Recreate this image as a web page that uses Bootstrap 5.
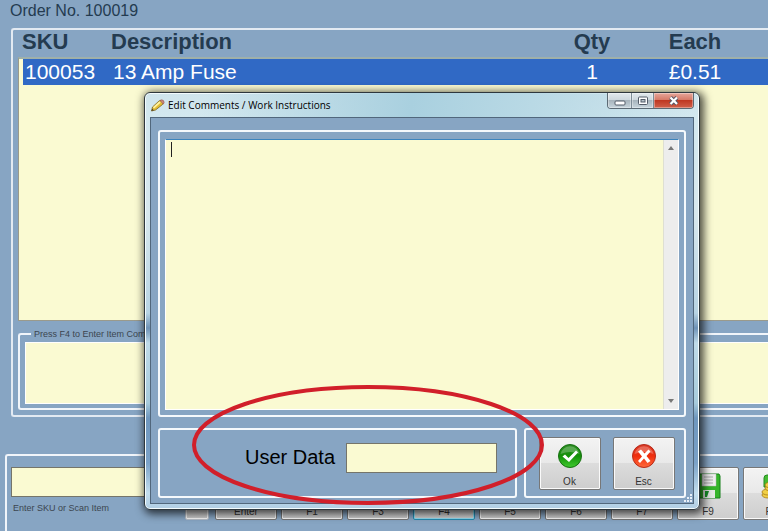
<!DOCTYPE html>
<html lang="en">
<head>
<meta charset="utf-8">
<meta name="viewport" content="width=device-width, initial-scale=1">
<title>Order No. 100019</title>
<link href="https://cdn.jsdelivr.net/npm/bootstrap@5.3.0/dist/css/bootstrap.min.css" rel="stylesheet">
<style>
:root { --panel:#87a5c3; --cream:#fafad2; --line:#f1f5fa; --ink:#243b50; }
body { background:var(--panel); font-family:"Liberation Sans",Arial,sans-serif; color:var(--ink); }
.screen { min-height:100vh; }
.order-title { font-size:16px; line-height:20px; padding:1px 10px 7px; }
.order-panel { margin-left:11px; border:2px solid #e3eaf2; border-right:0; border-radius:3px 0 0 3px; padding:0 0 5px 5px; }
.items { table-layout:fixed; border-collapse:separate; border-spacing:0; width:100%; }
.items th { font-size:22px; line-height:24px; height:27px; padding:0 0 3px 4px; color:var(--ink); }
.items td { font-size:21px; line-height:24px; height:28px; padding:1px 0 1px 6px; color:#fff; background:#3069c5; border-top:2px solid #9fb0aa; }
.items td:first-child { border-left:1px solid #9a9a8c; background:linear-gradient(90deg,var(--cream) 4px,#3069c5 4px); }
.items .num { text-align:center; padding-left:0; }
.col-sku { width:89px; } .col-qty { width:102px; } .col-each { width:104px; } .col-end { width:21px; }
.list-rest { height:236px; background:var(--cream); border-left:1px solid #9a9a8c; border-bottom:1px solid #9a9a8c; }
.item-comments { position:relative; margin-top:12px; border:2px solid var(--line); border-right:0; border-radius:3px 0 0 3px; padding:7px 0 4px 5px; }
.item-comments label { position:absolute; top:-8px; left:11px; padding:0 3px; background:var(--panel); font-size:9px; line-height:14px; color:#3c4650; white-space:nowrap; }
.note-box { height:62px; width:100%; resize:none; border:1px solid #fff; border-right:0; background:var(--cream); display:block; }
.entry-panel { margin:37px 0 0 5px; border:2px solid var(--line); border-width:2px 0 0 2px; border-radius:3px 0 0 0; padding:11px 0 12px 4px; overflow:hidden; flex-grow:1; }
.scan { width:168px; margin-right:6px; flex-shrink:0; }
.scan input { height:30px; width:100%; border:1px solid #75756a; background:var(--cream); display:block; }
.scan label { font-size:9px; line-height:14px; margin:4px 2px; color:#3c4650; display:block; }
.tool { width:62px; height:53px; flex-shrink:0; border:1px solid #777; border-radius:2px; box-shadow:inset 0 0 0 1px #fafafa; background:linear-gradient(#f3f3f3,#e9e9e9 48%,#dcdcdc 50%,#cdcdcd); font-size:10px; line-height:12px; color:#333; padding:4px 0 0; }
.tool svg { display:block; margin:0 auto; }
.tool span { display:block; margin-top:7px; }
.tool.slim { width:24px; margin-right:2px; border-color:#b7bfc8; }
.tool.current { border-color:#258bb0; box-shadow:inset 0 0 0 1px #8fdcf2; }
.edit-window { position:absolute; top:92px; left:144px; right:68px; border:1px solid #2e373d; border-radius:6px; padding:0 5px 5px; box-shadow:inset 0 0 0 1px #f3fbfd,2px 2px 9px 2px rgba(0,0,0,.7);
 background:linear-gradient(#cfe4ec,#d3e8ef 24px,#d8e8ee 120px,#b8d4e4 220px,#6f93b7 235px,#bfdbe9 250px,#a7cbdc 310px,#6f97be 325px,#7ba2c8 370px,#c4dfef 400px,#b0cde3); }
.caption-bar { height:24px; font-family:"Open Sans","Noto Sans",sans-serif; font-size:10px; color:#000; background:linear-gradient(100deg,transparent 10%,#a9d0df 48%,#b9d9e5 70%,transparent); }
.caption-bar svg { margin:0 3px 0 0; }
.win-controls { border:1px solid #5b6a74; border-top:0; border-radius:0 0 4px 4px; overflow:hidden; height:16px; align-self:flex-start; }
.win-controls button { border:0; padding:0; width:24px; border-right:1px solid #7d8c96; display:flex; align-items:center; justify-content:center; background:linear-gradient(#e2e9ed,#ccd6dc 48%,#a8b5bd 50%,#c7d5dc); box-shadow:inset 0 0 0 1px rgba(255,255,255,.35); }
.win-controls svg { margin:0; }
.win-controls button:nth-child(2) { width:22px; }
.win-controls button.close-win { width:39px; border-right:0; background:linear-gradient(#e6a79b,#d57765 48%,#bf3822 50%,#d0614b); }
.client { border:1px solid #51677c; background:var(--panel); padding:12px 7px 5px; position:relative; }
.group-box { border:2px solid #f5f9fc; border-radius:3px; }
.editor { position:relative; padding:7px 5px 5px; }
.editor-inner { border:1px solid #fff; border-top-color:#3d84bd; height:271px; background:var(--cream); }
.editor textarea { border:0; background:transparent; resize:none; outline:0; flex-grow:1; padding:2px 6px; }
.caret { position:absolute; left:11px; top:10px; width:1px; height:15px; background:#222; }
.scroll-rail { width:15px; background:#ededed; border-left:1px solid #dedfd2; padding:6px 0; }
.dialog-foot { margin-top:11px; gap:7px; }
.user-data { flex-grow:1; padding:0 18px 10px; gap:11px; height:70px; font-size:20px; color:#000; }
.user-data label { line-height:24px; padding-bottom:2px; }
.user-data input { width:151px; height:30px; border:1px solid #75756a; background:var(--cream); }
.actions { width:162px; height:70px; gap:12px; padding-left:3px; }
.ring { position:absolute; left:46px; top:291px; width:354px; height:122px; pointer-events:none; }
.grip { position:absolute; right:0; bottom:0; }
</style>
<script src="https://cdn.jsdelivr.net/npm/bootstrap@5.3.0/dist/js/bootstrap.bundle.min.js"></script>
</head>
<body>
<div class="screen position-relative d-flex flex-column overflow-hidden">
  <div class="order-title">Order No. 100019</div>
  <main class="order-panel">
    <table class="items">
      <colgroup><col class="col-sku"><col><col class="col-qty"><col class="col-each"><col class="col-end"></colgroup>
      <thead><tr><th>SKU</th><th>Description</th><th class="num">Qty</th><th class="num">Each</th><th></th></tr></thead>
      <tbody><tr><td>100053</td><td>13 Amp Fuse</td><td class="num">1</td><td class="num">£0.51</td><td></td></tr></tbody>
    </table>
    <div class="list-rest"></div>
    <div class="item-comments">
      <label for="itemNote">Press F4 to Enter Item Comments</label>
      <textarea class="note-box" id="itemNote"></textarea>
    </div>
  </main>
  <section class="entry-panel d-flex">
    <div class="scan"><input id="scan" type="text"><label for="scan">Enter SKU or Scan Item</label></div>
    <div class="d-flex gap-1">
      <button class="tool slim" type="button" aria-label="Blank"></button>
      <button class="tool" type="button"><svg width="26" height="26"></svg><span>Enter</span></button>
      <button class="tool" type="button"><svg width="26" height="26"></svg><span>F1</span></button>
      <button class="tool" type="button"><svg width="26" height="26"></svg><span>F3</span></button>
      <button class="tool current" type="button"><svg width="26" height="26"></svg><span>F4</span></button>
      <button class="tool" type="button"><svg width="26" height="26"></svg><span>F5</span></button>
      <button class="tool" type="button"><svg width="26" height="26"></svg><span>F6</span></button>
      <button class="tool" type="button"><svg width="26" height="26"></svg><span>F7</span></button>
      <button class="tool" type="button">
        <svg width="26" height="26" viewBox="0 0 26 26"><path d="M2 1h22l1 2v22H2z" fill="#35b52a" stroke="#16801a"/><path d="M7 1h14v12H7z" fill="#eee" stroke="#bbb" stroke-width=".5"/><path d="M9 4h9M9 7h9M9 10h9" stroke="#aaa"/><path d="M8 17h12v8H8z" fill="#e3e9e3"/><path d="M10 18h4l-2 6h-2z" fill="#159427"/></svg><span>F9</span></button>
      <button class="tool" type="button">
        <svg width="26" height="26" viewBox="0 0 26 26"><path d="M3 5q0-3 3-3h18v12H3z" fill="#45bb32" stroke="#238b20"/><g fill="#f1cf45" stroke="#a57b16" stroke-width=".8"><ellipse cx="7" cy="22" rx="6" ry="3"/><ellipse cx="7" cy="19" rx="6" ry="3"/><ellipse cx="10" cy="15" rx="6" ry="3"/><ellipse cx="10" cy="12" rx="6" ry="3"/></g></svg><span>F10</span></button>
    </div>
  </section>

  <div class="edit-window" role="dialog" aria-labelledby="winTitle">
    <div class="caption-bar d-flex align-items-center">
      <svg width="15" height="15" viewBox="0 0 15 15"><path d="M1.500 13 2.500 9 9 3Q11 1.500 13 3 14 5 12.500 6.500L5.500 12z" fill="#e3be35" stroke="#7b6221" stroke-width=".8"/><path d="M3.500 9.800 10 4" stroke="#fff3a0" stroke-width="1.700"/><path d="m10 2.400 3.300 3.800Q15 4.500 13.500 2.600 12 1.200 10 2.400z" fill="#c98a80" stroke="#8d4848" stroke-width=".5"/><path d="m1.500 13 .7-2.300 1.700 1.600z" fill="#4a3e25"/></svg>
      <span id="winTitle" class="flex-grow-1">Edit Comments / Work Instructions</span>
      <div class="win-controls d-flex">
        <button type="button" aria-label="Minimize"><svg width="12" height="12"><rect x="1" y="6" width="10" height="4" rx="1" fill="#fff" stroke="#535c68"/></svg></button>
        <button type="button" aria-label="Maximize"><svg width="12" height="12"><rect x="1.500" y="2" width="9" height="7.500" rx="1" fill="#fff" stroke="#535c68"/><rect x="4" y="4.500" width="4" height="2.500" fill="#b6c2c9" stroke="#535c68"/></svg></button>
        <button type="button" class="close-win" aria-label="Close"><svg width="12" height="12"><path d="m2.500 2.500 6.500 6.500M9 2.500 2.500 9" stroke="#535666" stroke-width="4"/><path d="m2.500 2.500 6.500 6.500M9 2.500 2.500 9" stroke="#fff" stroke-width="2.200"/></svg></button>
      </div>
    </div>
    <div class="client d-flex flex-column">
      <div class="group-box editor">
        <div class="editor-inner d-flex">
          <textarea aria-label="Comments"></textarea>
          <div class="scroll-rail d-flex flex-column justify-content-between align-items-center">
            <svg width="6" height="4"><path d="M0 4 3 0l3 4z" fill="#777"/></svg>
            <svg width="6" height="4"><path d="M0 0h6L3 4z" fill="#777"/></svg>
          </div>
        </div>
        <span class="caret"></span>
      </div>
      <div class="dialog-foot d-flex">
        <div class="group-box user-data d-flex align-items-center justify-content-end"><label for="userData">User Data</label><input id="userData" type="text"></div>
        <div class="group-box actions d-flex align-items-center justify-content-center">
          <button class="tool" type="button"><svg width="26" height="26" viewBox="0 0 26 26"><defs><linearGradient id="g" x2="0" y2="1"><stop stop-color="#2c8c22"/><stop offset=".5" stop-color="#149008"/><stop offset="1" stop-color="#3fcb2e"/></linearGradient></defs><circle cx="13" cy="13" r="11.500" fill="url(#g)" stroke="#176f12"/><path d="M3.500 11a9.700 9.700 0 0 1 19 0q-9-4-19 0z" fill="#fff" opacity=".25"/><path d="m5.500 13.500 2.500-2 3.500 3.500 7.500-7.500 2 2L12 19z" fill="#fff"/></svg><span>Ok</span></button>
          <button class="tool" type="button"><svg width="26" height="26" viewBox="0 0 26 26"><defs><linearGradient id="r" x2="0" y2="1"><stop stop-color="#d93a28"/><stop offset=".5" stop-color="#f02d0c"/><stop offset="1" stop-color="#ff6a3c"/></linearGradient></defs><circle cx="13" cy="13" r="11.500" fill="url(#r)" stroke="#b52b1a"/><path d="M3.500 11a9.700 9.700 0 0 1 19 0q-9-4-19 0z" fill="#fff" opacity=".25"/><path d="m7 8.500 3-2 3.500 4 4-4 2 2-4 4.500 4 5-3 2-3.500-4.500-4 4.500-2-2 4-4.500z" fill="#fff"/></svg><span>Esc</span></button>
        </div>
      </div>
      <svg class="grip" width="10" height="10" fill="#e8f0f8"><path d="M7 1h2v2H7zM7 4h2v2H7zM4 4h2v2H4zM7 7h2v2H7zM4 7h2v2H4zM1 7h2v2H1z"/></svg>
    </div>
    <svg class="ring" viewBox="0 0 354 122"><ellipse cx="177" cy="61" rx="174" ry="58" fill="none" stroke="#d11f2a" stroke-width="4"/></svg>
  </div>
</div>
</body>
</html>
